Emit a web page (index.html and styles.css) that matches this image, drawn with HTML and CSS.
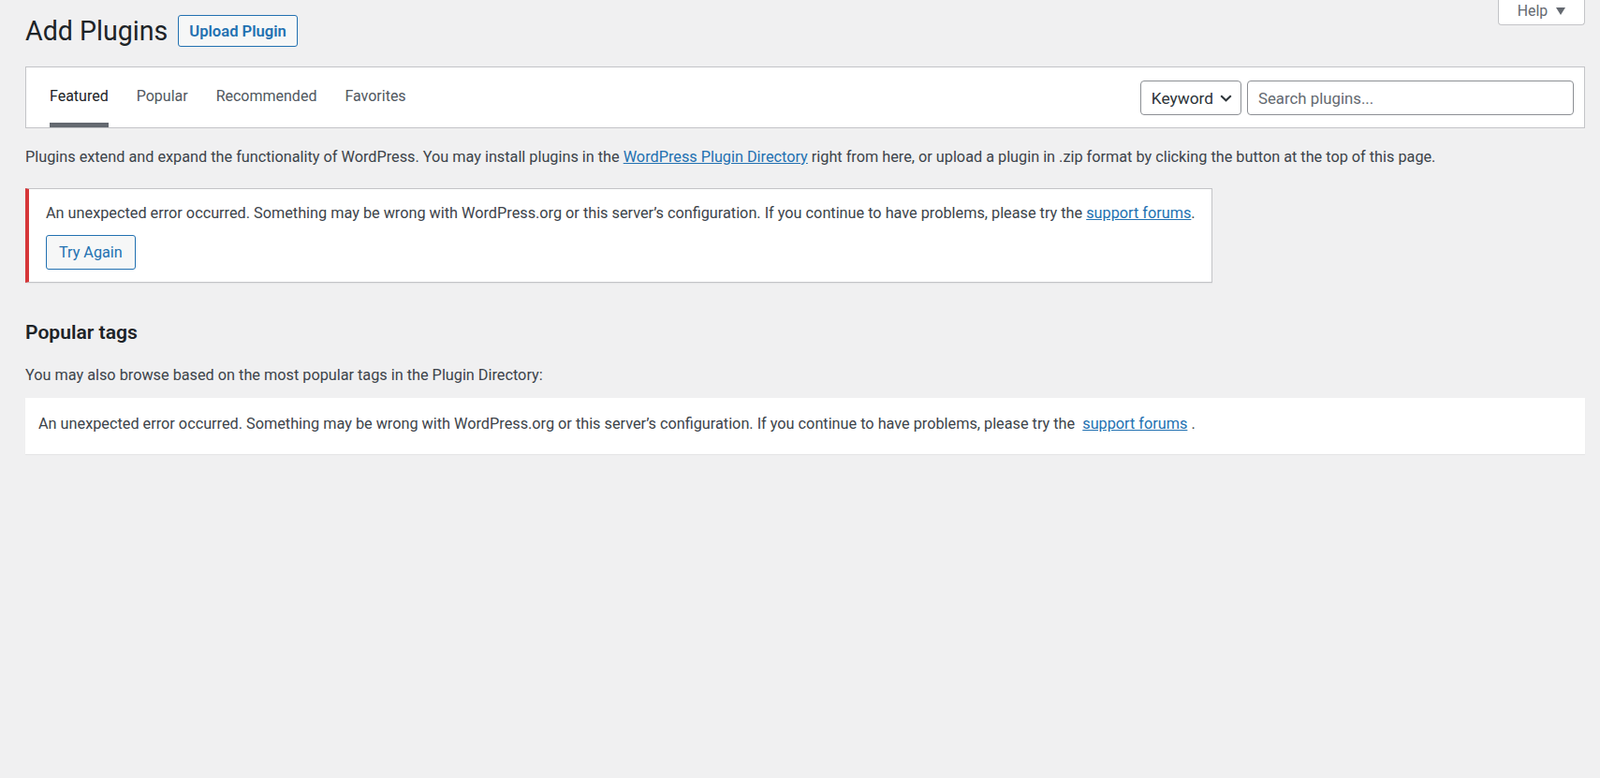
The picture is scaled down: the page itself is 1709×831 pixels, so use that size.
FILE: index.html
```html
<!DOCTYPE html>
<html lang="en">
<head>
    <meta charset="UTF-8">
    <meta name="viewport" content="width=device-width, initial-scale=1.0">
    <title>Add Plugins</title>
    <link rel="stylesheet" href="styles.css">
</head>
<body>
    <div class="wrap">
        <!-- Screen meta tab -->
        <button class="help-tab">Help
            <svg class="help-arrow" width="10" height="8" viewBox="0 0 10 8">
                <path d="M0 0 H10 L5 8 Z" fill="#646970"/>
            </svg>
        </button>

        <div class="page-header">
            <h1>Add Plugins</h1>
            <button class="upload-button">Upload Plugin</button>
        </div>

        <div class="wp-filter">
            <ul class="filter-links">
                <li><a href="#" class="current">Featured</a></li>
                <li><a href="#">Popular</a></li>
                <li><a href="#">Recommended</a></li>
                <li><a href="#">Favorites</a></li>
            </ul>
            <form class="search-form">
                <div class="type-select">
                    <span>Keyword</span>
                    <svg class="chevron" width="13" height="8" viewBox="0 0 13 8">
                        <path d="M1.2 1.3 L6.5 6.3 L11.8 1.3" fill="none" stroke="#2c3338" stroke-width="2"/>
                    </svg>
                </div>
                <input class="search-input" type="search" placeholder="Search plugins...">
            </form>
        </div>

        <p class="intro">Plugins extend and expand the functionality of WordPress. You may install plugins in the <a href="#">WordPress Plugin Directory</a> right from here, or upload a plugin in .zip format by clicking the button at the top of this page.</p>

        <div class="notice-error">
            <p>An unexpected error occurred. Something may be wrong with WordPress.org or this server&#8217;s configuration. If you continue to have problems, please try the <a href="#">support forums</a>.</p>
            <button class="try-again">Try Again</button>
        </div>

        <h2>Popular tags</h2>
        <p class="tags-intro">You may also browse based on the most popular tags in the Plugin Directory:</p>

        <div class="tags-box">
            An unexpected error occurred. Something may be wrong with WordPress.org or this server&#8217;s configuration. If you continue to have problems, please try the&nbsp; <a href="#">support forums</a> .
        </div>
    </div>
</body>
</html>
```

FILE: styles.css
```css
:root {
    --bg: #f0f0f1;
    --heading: #1d2327;
    --text: #3c434a;
    --link: #2271b1;
    --border: #c3c4c7;
    --muted: #646970;
    --red: #d63638;
}

body {
    margin: 0;
    background: var(--bg);
    color: var(--text);
    font-family: Roboto, "Liberation Sans", sans-serif;
    font-size: 16.25px;
    line-height: 22px;
}

a {
    color: var(--link);
}

.wrap {
    position: relative;
    padding: 0 16px 40px 27px;
}

.help-tab {
    position: absolute;
    top: 0;
    right: 16px;
    display: flex;
    align-items: center;
    justify-content: center;
    gap: 9px;
    width: 93px;
    height: 27px;
    background: #fff;
    border: 1px solid var(--border);
    border-top: none;
    border-radius: 0 0 4px 4px;
    color: var(--muted);
    font-family: inherit;
    font-size: 15.8px;
    padding: 0 0 3px 0;
}

.page-header {
    display: flex;
    align-items: center;
    gap: 11px;
    padding-top: 16px;
}

h1 {
    margin: 0;
    font-size: 28.6px;
    font-weight: 400;
    line-height: 34px;
    color: var(--heading);
}

.upload-button {
    height: 34px;
    padding: 0 11px;
    background: #f6f7f7;
    border: 1px solid var(--link);
    border-radius: 3px;
    color: var(--link);
    font-family: inherit;
    font-size: 16.6px;
    font-weight: 600;
}

.wp-filter {
    display: flex;
    justify-content: space-between;
    align-items: center;
    height: 66px;
    margin-top: 21px;
    background: #fff;
    border: 1px solid var(--border);
    box-sizing: border-box;
    padding: 0 11px 0 10px;
}

.filter-links {
    display: flex;
    list-style: none;
    margin: 0;
    padding: 0;
    height: 100%;
}

.filter-links li {
    margin: 0 15px;
    height: 100%;
}

.filter-links a {
    display: flex;
    align-items: center;
    height: 100%;
    box-sizing: border-box;
    padding-top: 3px;
    border-bottom: 5px solid transparent;
    color: #50575e;
    text-decoration: none;
    font-size: 16px;
}

.filter-links a.current {
    color: var(--heading);
    border-bottom-color: var(--muted);
}

.search-form {
    display: flex;
    gap: 6px;
    margin-top: 1px;
}

.type-select {
    display: flex;
    align-items: center;
    gap: 7px;
    height: 37px;
    box-sizing: border-box;
    padding: 0 9px 0 11px;
    border: 1px solid #8c8f94;
    border-radius: 4px;
    color: #2c3338;
    font-size: 17.3px;
}

.search-input {
    width: 349px;
    height: 37px;
    box-sizing: border-box;
    padding: 0 11px;
    border: 1px solid #8c8f94;
    border-radius: 4px;
    font-family: inherit;
    font-size: 16.8px;
    color: #2c3338;
}

.search-input::placeholder {
    color: var(--muted);
}

.intro {
    margin: 20px 0 0 0;
}

.notice-error {
    width: 1268px;
    box-sizing: border-box;
    margin-top: 22px;
    padding: 15px 8px 13px 18px;
    background: #fff;
    border: 1px solid var(--border);
    border-left: 4px solid var(--red);
    box-shadow: 0 1px 1px rgba(0, 0, 0, 0.04);
}

.notice-error p {
    margin: 0 0 12px 0;
    white-space: nowrap;
}

.try-again {
    height: 37px;
    padding: 0 13px;
    background: #f6f7f7;
    border: 1px solid var(--link);
    border-radius: 3px;
    color: var(--link);
    font-family: inherit;
    font-size: 16.2px;
}

h2 {
    margin: 39px 0 0 0;
    font-size: 21.1px;
    font-weight: 600;
    line-height: 28px;
    color: var(--heading);
}

.tags-intro {
    margin: 21px 0 0 0;
}

.tags-box {
    margin-top: 13px;
    padding: 17px 14px 21px 14px;
    background: #fff;
    box-shadow: 0 1px 1px rgba(0, 0, 0, 0.04);
}
```
